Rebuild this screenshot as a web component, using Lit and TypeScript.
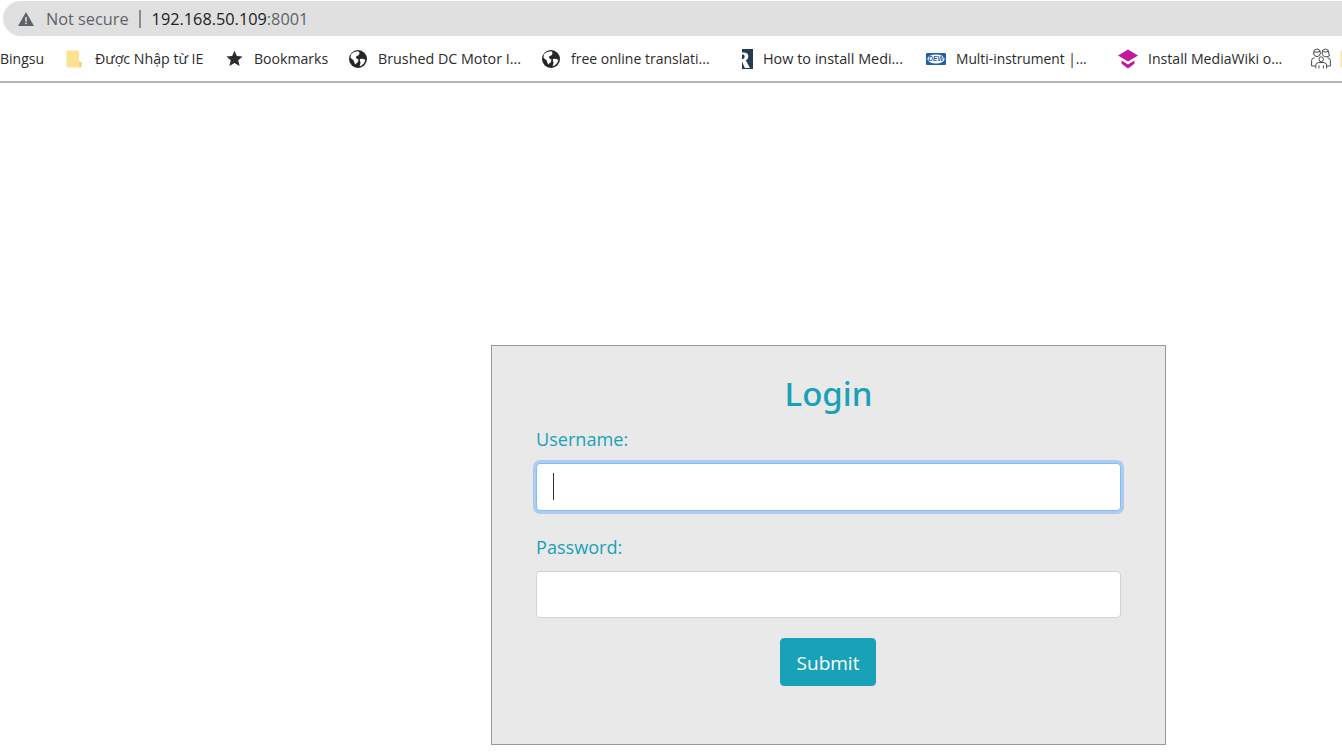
import { LitElement, html, css, svg } from "lit";
import { customElement } from "lit/decorators.js";

const globe = svg`<svg viewBox="0 0 18 18" width="18" height="18"><circle cx="9" cy="9" r="9" fill="#262626"/><path d="M2.2 4 Q5 1 9.4 1.2 L10.6 3 Q10.4 5.4 8 6 Q6.4 6.6 7.2 8.2 L9.4 9.4 Q9.6 11.6 7.8 13 L6.2 14.4 Q5 11.6 4.4 10 Q2.6 9.4 1.4 7.6 Z" fill="#fff"/><path d="M11 9 Q14 8.4 16.4 10 Q15.8 13.4 12.4 15.8 L10.6 16 Q11.4 13.4 11.6 12.4 Q10.4 11.4 11 9Z" fill="#fff"/></svg>`;
const icons: Record<string, unknown> = {
  none: "",
  folder: svg`<svg viewBox="0 0 16 18" width="16" height="18"><path d="M1 .5 H11.5 Q13 .5 13 2 V11.5 H15.5 V16 Q15.5 17.5 14 17.5 H2 Q.5 17.5 .5 16 V1.5 Q.5 .5 1 .5Z" fill="#fde293"/><rect x="13" y="12" width="2.5" height="5" fill="#f5cf6a"/></svg>`,
  star: svg`<svg viewBox="0 0 16 16" width="17" height="17"><path d="M8 .6 L10.2 5.6 L15.6 6.1 L11.5 9.7 L12.8 15 L8 12.2 L3.2 15 L4.5 9.7 L.4 6.1 L5.8 5.6Z" fill="#2b2b2b"/></svg>`,
  globe,
  r: svg`<svg viewBox="0 0 16 20" width="16" height="20"><rect x="5" width="11" height="20" fill="#263a52"/><path d="M1 3.4 H6.5 Q11.4 3.4 11.4 7.6 Q11.4 10.4 8.8 11.2 L13 19 H7.8 L5 12.4 V19 H1 Z" fill="#fff"/><path d="M5 5.4 H6 Q7.6 5.4 7.6 7.6 Q7.6 10 6 10 H5Z" fill="#263a52"/></svg>`,
  dew: svg`<svg viewBox="0 0 20 12" width="20" height="12"><rect width="20" height="12" rx="1" fill="#1f5fa8"/><ellipse cx="10" cy="6" rx="8.6" ry="4.6" fill="#fff"/><text x="10" y="8.2" text-anchor="middle" font-size="6.6" font-weight="700" font-style="italic" font-family="Liberation Sans" fill="#1f5fa8">DEW</text></svg>`,
  cap: svg`<svg viewBox="0 0 20 20" width="20" height="20"><path d="M10 .5 L20 6.5 L10 12.5 L0 6.5Z" fill="#c2189b"/><path d="M3.6 11.6 L10 15.4 L16.4 11.6 V14.8 L10 19.5 L3.6 14.8Z" fill="#c2189b"/></svg>`,
  family: svg`<svg viewBox="0 0 20 21" width="20" height="21" fill="none" stroke="#4a4a4a" stroke-width="1"><path d="M2.6 5 Q2.6 1 6 1 Q9.4 1 9.4 5 Q9.4 8.6 6 8.6 Q2.6 8.6 2.6 5Z M2.8 4 Q6 4.6 9.2 3.4"/><path d="M11 5 Q11 1 14.4 1 Q17.8 1 17.8 5 L18.4 8 L15.6 8.8 Q11.6 9 11 5Z M11.4 3.6 Q14.6 4.6 17.4 3.4"/><path d="M8 11.4 Q8 8.8 10.2 8.8 Q12.4 8.8 12.4 11.4 Q12.4 13.8 10.2 13.8 Q8 13.8 8 11.4Z"/><path d="M.6 18 V12.4 Q.6 10.2 3.6 9.8 M19.4 18 V12.4 Q19.4 10.2 16.4 9.8 M4.8 20.4 V17 Q4.8 15 7.4 14.6 H13 Q15.6 15 15.6 17 V20.4 M.6 18 H4.4 M16 18 H19.4 M8 20.4 V17.4 M12.4 20.4 V17.4"/></svg>`,
};

const bookmarks = [
  { icon: "none", label: "Bingsu", width: 66, iconBox: 0, size: 14 },
  { icon: "folder", label: "Được Nhập từ IE", width: 160, iconBox: 29, size: 14.2 },
  { icon: "star", label: "Bookmarks", width: 123, iconBox: 28, size: 14.1 },
  { icon: "globe", label: "Brushed DC Motor I...", width: 193, iconBox: 29, size: 14.3 },
  { icon: "globe", label: "free online translati...", width: 195, iconBox: 29, size: 14 },
  { icon: "r", label: "How to install Medi...", width: 189, iconBox: 26, size: 14.4 },
  { icon: "dew", label: "Multi-instrument |...", width: 192, iconBox: 30, size: 13.8 },
  { icon: "cap", label: "Install MediaWiki o...", width: 193, iconBox: 30, size: 14.1 },
  { icon: "family", label: "", width: 29, iconBox: 29, size: 14 },
  { icon: "folder", label: "", width: 16, iconBox: 16, size: 14 },
];

@customElement("app-root")
export class AppRoot extends LitElement {
  static styles = css`
    :host {
      display: block;
      width: 1342px;
      height: 752px;
      overflow: hidden;
      background: #fff;
      font-family: "Open Sans", "Noto Sans", sans-serif;
    }
    .chrome {
      height: 81px;
      border-bottom: 2px solid #b4b4b4;
      display: flex;
      flex-direction: column;
      overflow: hidden;
    }
    .omni-row {
      padding: 1px 0 0 3px;
    }
    .omni {
      height: 35px;
      background: #e0e0e0;
      border-radius: 17.5px 0 0 17.5px;
      display: flex;
      align-items: center;
      padding-left: 15px;
      font-size: 16.3px;
      color: #5f6368;
    }
    .warn {
      margin-right: 12px;
      display: block;
    }
    .sep {
      width: 2px;
      height: 18px;
      background: #8c8c8c;
      margin: 0 11px 0 10px;
    }
    .host {
      color: #222;
    }
    .bar {
      display: flex;
      height: 45px;
      align-items: center;
      white-space: nowrap;
    }
    .bm {
      display: flex;
      align-items: center;
      flex: none;
      color: #2b2b2b;
    }
    .bm-icon {
      flex: none;
      display: flex;
      align-items: center;
    }
    .main {
      padding: 262px 0 0 491px;
    }
    .card {
      box-sizing: border-box;
      width: 675px;
      height: 400px;
      background: #e9e9e9;
      border: 1px solid #999;
      padding: 26px 44px 0;
      color: #17a2b8;
    }
    h2 {
      margin: 0;
      font-family: "Noto Sans", sans-serif;
      font-size: 33px;
      line-height: 43px;
      font-weight: 500;
      text-align: center;
    }
    label {
      display: block;
      font-size: 18.1px;
      line-height: 27px;
    }
    .l1 { margin-top: 10.5px; }
    .l2 { margin-top: 23px; }
    .field {
      box-sizing: border-box;
      width: 585px;
      height: 47.5px;
      margin-top: 10.5px;
      background: #fff;
      border: 1px solid #ced4da;
      border-radius: 4px;
      display: flex;
      align-items: center;
      padding-left: 15.5px;
    }
    .l2 + .field { margin-top: 10px; }
    .focused {
      border-color: #80bdff;
      box-shadow: 0 0 0 3px rgba(0, 123, 255, 0.25);
    }
    .caret {
      width: 1px;
      height: 27px;
      background: #333;
    }
    .actions {
      display: flex;
      justify-content: center;
      margin-top: 20px;
      padding-right: 1px;
    }
    button {
      width: 96px;
      height: 48px;
      background: #17a2b8;
      color: #fff;
      border: 1px solid #17a2b8;
      border-radius: 4px;
      font: inherit;
      font-size: 19px;
      padding: 2px 0 0;
    }
  `;

  render() {
    return html`
      <div class="chrome">
        <div class="omni-row">
          <div class="omni">
            <svg class="warn" viewBox="0 0 16 14" width="16" height="14"><path d="M8 0 L16 14 H0Z" fill="#5f6368"/><rect x="7.2" y="5" width="1.6" height="4.6" fill="#e0e0e0"/><rect x="7.2" y="10.6" width="1.6" height="1.6" fill="#e0e0e0"/></svg>
            <span>Not secure</span><span class="sep"></span><span><span class="host">192.168.50.109</span>:8001</span>
          </div>
        </div>
        <div class="bar">
          ${bookmarks.map(
            (b) => html`<div class="bm" style="width:${b.width}px;font-size:${b.size}px">
              <span class="bm-icon" style="width:${b.iconBox}px">${icons[b.icon]}</span><span>${b.label}</span>
            </div>`
          )}
        </div>
      </div>
      <div class="main">
        <div class="card">
          <h2>Login</h2>
          <label class="l1">Username:</label>
          <div class="field focused"><span class="caret"></span></div>
          <label class="l2">Password:</label>
          <div class="field"></div>
          <div class="actions"><button>Submit</button></div>
        </div>
      </div>
    `;
  }
}
